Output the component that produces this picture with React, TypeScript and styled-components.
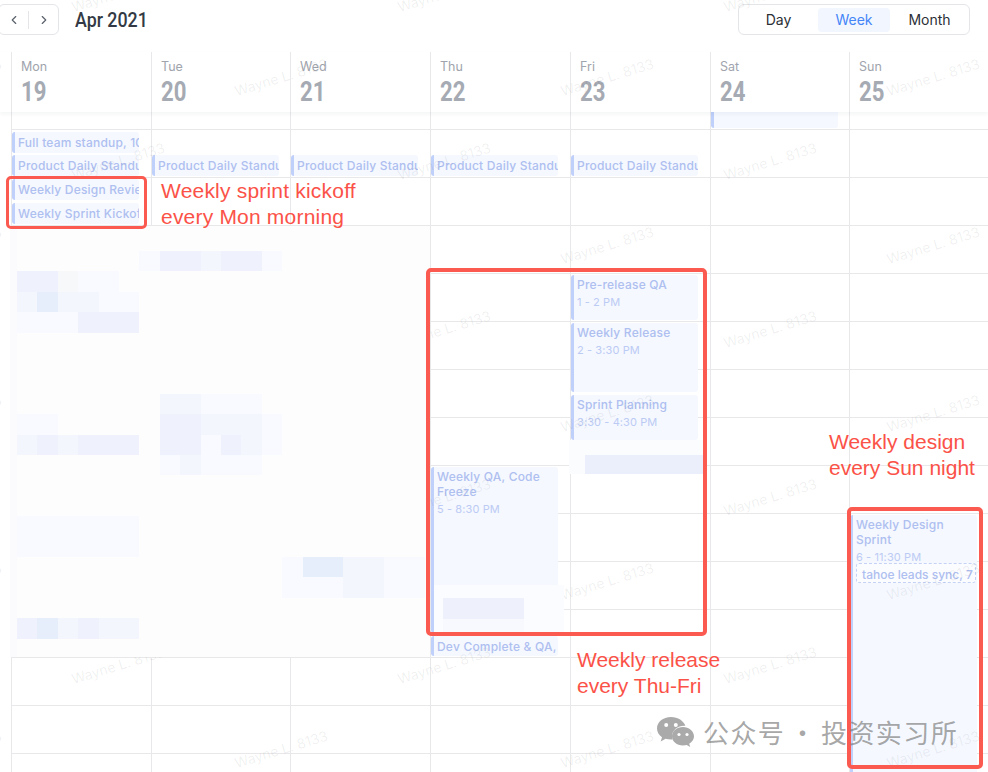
import * as React from 'react';
import styled, {createGlobalStyle} from 'styled-components';
import {ChevronLeft, ChevronRight} from 'lucide-react';

const GlobalStyle = createGlobalStyle`
  html, body {
    margin: 0;
    padding: 0;
    background: #fff;
  }
`;

const Page = styled.div`
  position: relative;
  width: 988px;
  height: 772px;
  overflow: hidden;
  background: #fff;
  font-family: Inter, "Liberation Sans", sans-serif;
`;

const Toolbar = styled.div`
  display: flex;
  align-items: flex-start;
  justify-content: space-between;
  box-sizing: border-box;
  height: 52px;
  padding: 4px 18px 0 0;
`;

const ToolbarLeft = styled.div`
  display: flex;
  align-items: center;
  gap: 16px;
  margin-left: -2px;
`;

const NavBox = styled.div`
  display: flex;
  align-items: center;
  box-sizing: border-box;
  width: 61px;
  height: 31px;
  border: 1px solid #e3e5e8;
  border-radius: 6px;
  color: #5b616b;
`;

const NavButton = styled.span`
  flex: 1;
  display: flex;
  align-items: center;
  justify-content: center;
`;

const NavDivider = styled.span`
  width: 1px;
  height: 18px;
  background: #e3e5e8;
`;

const MonthTitle = styled.h1`
  margin: 0;
  font-family: Roboto, sans-serif;
  font-size: 20px;
  font-weight: 500;
  color: #333a45;
  transform: scaleX(0.89);
  transform-origin: left center;
`;

const Segmented = styled.div`
  display: flex;
  align-items: center;
  box-sizing: border-box;
  width: 232px;
  height: 31px;
  border: 1px solid #e3e5e8;
  border-radius: 6px;
`;

const Segment = styled.span<{$active?: boolean}>`
  flex: ${p => (p.$active ? '0 0 72px' : '1')};
  height: 24px;
  line-height: 24px;
  text-align: center;
  font-size: 14px;
  border-radius: 4px;
  color: ${p => (p.$active ? '#4485f7' : '#2b2f36')};
  background: ${p => (p.$active ? '#f2f6ff' : 'transparent')};
`;

const columns = '11px 140px 139px 140px 140px 140px 139px 139px';

const DayHeader = styled.div`
  position: relative;
  z-index: 2;
  display: grid;
  grid-template-columns: ${columns};
  height: 60px;
  background: #fff;
  box-shadow: 0 2px 4px rgba(20, 30, 50, 0.05);
`;

const HeaderCell = styled.div`
  box-sizing: border-box;
  padding: 7px 0 0 9px;
  border-left: 1px solid #e8e8ea;
`;

const DayName = styled.div`
  font-size: 12.5px;
  line-height: 16px;
  color: #9fa4ad;
`;

const DayNumber = styled.div`
  margin-top: 2px;
  font-family: Roboto, sans-serif;
  font-size: 27px;
  line-height: 30px;
  font-weight: 700;
  color: #a5aab3;
  transform: scaleX(0.82);
  transform-origin: left center;
`;

const TimeGrid = styled.div`
  display: grid;
  grid-template-columns: ${columns};
  height: 660px;
`;

const DayColumn = styled.div`
  position: relative;
  border-left: 1px solid #e8e8ea;
`;

const Slot = styled.div<{$short?: boolean}>`
  box-sizing: border-box;
  height: ${p => (p.$short ? 18 : 48)}px;
  border-bottom: 1px solid #e8e8ea;
`;

const Event = styled.div<{$top: number; $height: number}>`
  position: absolute;
  top: ${p => p.$top}px;
  left: 0;
  box-sizing: border-box;
  width: 127px;
  height: ${p => p.$height}px;
  padding: 2px 0 0 3px;
  overflow: hidden;
  background: #f5f8ff;
  border-left: 3px solid #bfd0fb;
  border-radius: 3px;
`;

const EventTitle = styled.div<{$nowrap?: boolean}>`
  font-size: 12px;
  line-height: ${p => (p.$nowrap ? 17 : 15)}px;
  font-weight: 500;
  letter-spacing: 0.2px;
  color: #aebff0;
  white-space: ${p => (p.$nowrap ? 'nowrap' : 'normal')};
`;

const EventTime = styled.div`
  margin-top: 3px;
  font-size: 11px;
  line-height: 15px;
  letter-spacing: 0.1px;
  color: #bccbf4;
`;

const InnerEvent = styled.div`
  box-sizing: border-box;
  width: 120px;
  height: 20px;
  margin-top: -2px;
  padding: 3px 0 0 5px;
  background: #fbfcff;
  border: 1px dashed #c5d2f5;
  border-radius: 3px;
  font-size: 12px;
  line-height: 16px;
  font-weight: 500;
  white-space: nowrap;
  overflow: hidden;
  color: #aebff0;
`;

const WatermarkText = styled.span`
  position: absolute;
  z-index: 3;
  transform: translate(-50%, -50%) rotate(-17deg);
  font-family: Inter, sans-serif;
  font-size: 14px;
  white-space: nowrap;
  color: rgba(40, 40, 50, 0.07);
`;

const MosaicLayer = styled.svg`
  position: absolute;
  z-index: 4;
  display: block;
  left: 0;
  top: 0;
`;

const RedFrame = styled.div<{$left: number; $top: number; $width: number; $height: number; $line?: number}>`
  position: absolute;
  z-index: 5;
  left: ${p => p.$left}px;
  top: ${p => p.$top}px;
  box-sizing: border-box;
  width: ${p => p.$width}px;
  height: ${p => p.$height}px;
  border: ${p => p.$line ?? 4}px solid #fb5a51;
  border-radius: 5px;
`;

const Note = styled.div<{$left: number; $top: number; $spacing?: number}>`
  position: absolute;
  z-index: 5;
  left: ${p => p.$left}px;
  top: ${p => p.$top}px;
  font-family: "Liberation Sans", sans-serif;
  font-size: 21px;
  line-height: 26px;
  letter-spacing: ${p => p.$spacing ?? 0}px;
  white-space: nowrap;
  color: #fb5248;
`;

const Stamp = styled.div`
  position: absolute;
  z-index: 5;
  left: 656px;
  top: 714px;
  display: flex;
  align-items: center;
  gap: 8px;
  font-family: "Noto Sans CJK SC", sans-serif;
  font-size: 26px;
  line-height: 36px;
  letter-spacing: 1.4px;
  word-spacing: -3px;
  white-space: nowrap;
  color: rgba(110, 110, 110, 0.62);
`;

type CalEvent = {
    top: number;
    height: number;
    title: string;
    time?: string;
    nowrap?: boolean;
    inner?: string;
};

const standup: CalEvent = {top: 43, height: 21, title: 'Product Daily Standup', nowrap: true};

const days: {name: string; date: number; events: CalEvent[]}[] = [
    {
        name: 'Mon', date: 19, events: [
            {top: 20, height: 21, title: 'Full team standup, 10am', nowrap: true},
            standup,
            {top: 67, height: 21, title: 'Weekly Design Review', nowrap: true},
            {top: 91, height: 21, title: 'Weekly Sprint Kickoff', nowrap: true},
        ]
    },
    {name: 'Tue', date: 20, events: [standup]},
    {name: 'Wed', date: 21, events: [standup]},
    {
        name: 'Thu', date: 22, events: [
            standup,
            {top: 355, height: 166, title: 'Weekly QA, Code Freeze', time: '5 - 8:30 PM'},
            {top: 524, height: 20, title: 'Dev Complete & QA, 8:30pm', nowrap: true},
        ]
    },
    {
        name: 'Fri', date: 23, events: [
            standup,
            {top: 163, height: 45, title: 'Pre-release QA', time: '1 - 2 PM'},
            {top: 211, height: 69, title: 'Weekly Release', time: '2 - 3:30 PM'},
            {top: 283, height: 45, title: 'Sprint Planning', time: '3:30 - 4:30 PM'},
        ]
    },
    {name: 'Sat', date: 24, events: [{top: -40, height: 56, title: ''}]},
    {
        name: 'Sun', date: 25, events: [
            {top: 403, height: 260, title: 'Weekly Design Sprint', time: '6 - 11:30 PM', inner: 'tahoe leads sync, 7'},
        ]
    },
];

const hourSlots = Array.from({length: 14}, (_, i) => i);

// watermark lattice: every other row is shifted half a step sideways
const watermarks: {x: number; y: number}[] = [];
for (let row = -1; row < 10; row++) {
    const shifted = row % 2 !== 0;
    for (let col = 0; col < 4; col++) {
        watermarks.push({x: (shifted ? 118 : -45) + col * 326, y: 77 + row * 84});
    }
}

const tones: Record<string, string> = {
    a: '#f9faff',
    b: '#f4f6fd',
    c: '#eff2fc',
    d: '#e7eefb',
    f: '#f7f8fa',
};

// redacted area, one string per row of the pixelation, column 0 sits at x = 17
const mosaicRows: Record<number, string> = {
    1: '......accbcca',
    2: 'ccfaa........',
    3: 'bdbbaa.',
    4: 'aaaccc',
    8: '.......bbaaa',
    9: 'aa.....ccbbba',
    10: 'bcbccc.ccacba',
    11: '.......abaaa',
    14: 'aaaaaa',
    15: 'aaaaaa',
    16: '.............addbbaa',
    17: '.............aaabbaa',
    19: 'cdbcbb',
};

const cell = 20.4;

const mosaicCells: {x: number; y: number; fill: string}[] = [];
Object.entries(mosaicRows).forEach(([row, tonesInRow]) => {
    tonesInRow.split('').forEach((tone, col) => {
        if (tone !== '.') {
            mosaicCells.push({x: 17 + col * cell, y: 230.6 + Number(row) * cell, fill: tones[tone]});
        }
    });
});

const WeChatIcon = () => (
    <svg width="39" height="32" viewBox="0 0 39 32">
        <path
            d="M15 1C7 1 1 6 1 12.4c0 3.6 2 6.7 5 8.800l-1.300 4.200 4.900-2.600c1.700.5 3.400.8 5.400.8.500 0 1 0 1.500-.1-.3-1-.5-2-.5-3 0-6 5.600-10.700 12.400-10.700h1C27.800 5 22 1 15 1z"
            fill="#aaa"/>
        <circle cx="10.200" cy="9" r="2" fill="#fff"/>
        <circle cx="19.800" cy="9" r="2" fill="#fff"/>
        <path
            d="M38 20.300c0-5.200-5.200-9.300-11-9.300-6.200 0-11 4.100-11 9.300s4.800 9.300 11 9.300c1.300 0 2.600-.2 3.700-.5l3.500 2-1-3.300c2.900-1.900 4.800-4.500 4.800-7.500z"
            fill="#aaa"/>
        <circle cx="23" cy="18.500" r="1.600" fill="#fff"/>
        <circle cx="31" cy="18.500" r="1.600" fill="#fff"/>
    </svg>
);

export default function App() {
    return (
        <Page>
            <GlobalStyle/>
            <Toolbar>
                <ToolbarLeft>
                    <NavBox>
                        <NavButton><ChevronLeft size={14}/></NavButton>
                        <NavDivider/>
                        <NavButton><ChevronRight size={14}/></NavButton>
                    </NavBox>
                    <MonthTitle>Apr 2021</MonthTitle>
                </ToolbarLeft>
                <Segmented>
                    <Segment>Day</Segment>
                    <Segment $active>Week</Segment>
                    <Segment>Month</Segment>
                </Segmented>
            </Toolbar>

            <DayHeader>
                <span/>
                {days.map(day => (
                    <HeaderCell key={day.name}>
                        <DayName>{day.name}</DayName>
                        <DayNumber>{day.date}</DayNumber>
                    </HeaderCell>
                ))}
            </DayHeader>

            <TimeGrid>
                <span/>
                {days.map(day => (
                    <DayColumn key={day.name}>
                        <Slot $short/>
                        {hourSlots.map(slot => <Slot key={slot}/>)}
                        {day.events.map(ev => (
                            <Event key={ev.top} $top={ev.top} $height={ev.height}>
                                <EventTitle $nowrap={ev.nowrap}>{ev.title}</EventTitle>
                                {ev.time && <EventTime>{ev.time}</EventTime>}
                                {ev.inner && <InnerEvent>{ev.inner}</InnerEvent>}
                            </Event>
                        ))}
                    </DayColumn>
                ))}
            </TimeGrid>

            {watermarks.map(mark => (
                <WatermarkText key={`${mark.x}-${mark.y}`} style={{left: mark.x, top: mark.y}}>
                    Wayne L. 8133
                </WatermarkText>
            ))}

            <MosaicLayer width="988" height="772" shapeRendering="crispEdges">
                <rect x="10" y="226" width="420" height="431" fill="#fdfdfe"/>
                <rect x="10" y="226" width="7" height="431" fill="#fbfbfe"/>
                {mosaicCells.map(c => (
                    <rect key={`${c.x}-${c.y}`} x={c.x} y={c.y} width={cell} height={cell} fill={c.fill}/>
                ))}
                <rect x="569" y="440" width="136" height="34" fill="#fbfcfe"/>
                <rect x="585" y="455" width="120" height="19" fill="#ebeffb"/>
                <rect x="434" y="585" width="130" height="48" fill="#fbfcff"/>
                <rect x="443" y="598" width="81" height="21" fill="#eef1fb"/>
                <rect x="443" y="619" width="81" height="13" fill="#f8f9fe"/>
            </MosaicLayer>

            <RedFrame $left={6} $top={176} $width={141} $height={53} $line={3}/>
            <RedFrame $left={426} $top={268} $width={281} $height={368}/>
            <RedFrame $left={847} $top={507} $width={136} $height={262}/>

            <Note $left={161} $top={178} $spacing={0.2}>Weekly sprint kickoff<br/>every Mon morning</Note>
            <Note $left={577} $top={647}>Weekly release<br/>every Thu-Fri</Note>
            <Note $left={829} $top={429}>Weekly design<br/>every Sun night</Note>

            <Stamp>
                <WeChatIcon/>
                公众号 · 投资实习所
            </Stamp>
        </Page>
    );
}
